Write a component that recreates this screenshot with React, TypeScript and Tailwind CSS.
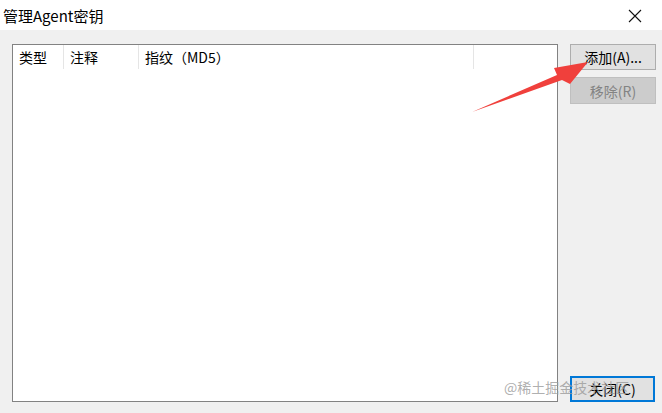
import React from 'react';

const font = { fontFamily: '"Microsoft YaHei", "Noto Sans CJK SC", "Liberation Sans", sans-serif' };

const columns = [
  { label: '类型', width: 'w-[51px]' },
  { label: '注释', width: 'w-[75px]' },
  { label: '指纹（MD5）', width: 'w-[335px]' },
];

const App: React.FC = () => {
  return (
    <div className="w-[662px] h-[413px] flex flex-col overflow-hidden relative text-black" style={font}>
      {/* title bar */}
      <div className="h-[30px] bg-white flex items-center justify-between pl-[3px] pr-[20px]">
        <span className="text-[15px] leading-none">管理Agent密钥</span>
        <svg width="14" height="14" viewBox="0 0 14 14" className="mt-[1px]">
          <path d="M1 1 L13 13 M13 1 L1 13" stroke="#111" strokeWidth="1.1" fill="none" />
        </svg>
      </div>

      {/* body */}
      <div className="flex-1 bg-[#f0f0f0] flex pt-[14px] pl-[12px] pb-[11px]">
        <div className="w-[546px] h-[358px] bg-white border border-[#828282]">
          <div className="flex h-[24px] items-center">
            {columns.map((c) => (
              <div key={c.label} className={`${c.width} h-full flex items-center pl-[6px] border-r border-[#e5e5e5] text-[14px]`}>
                {c.label}
              </div>
            ))}
          </div>
        </div>

        <div className="ml-[12px] w-[86px] flex flex-col">
          <button className="h-[26px] bg-[#e1e1e1] border border-[#adadad] text-[14px] leading-none">
            添加(A)...
          </button>
          <button className="mt-[7px] h-[27px] bg-[#cccccc] border border-[#bfbfbf] text-[14px] text-[#838383] leading-none">
            移除(R)
          </button>
          <div className="flex-1" />
          <button className="h-[26px] w-[85px] bg-[#e1e1e1] border-2 border-[#0078d7] text-[14px] leading-none">
            关闭(C)
          </button>
        </div>
      </div>

      {/* red annotation arrow */}
      <svg className="absolute left-0 top-0 pointer-events-none" width="662" height="413">
        <polygon points="472,112 557,75 554,68 588,62 570,84 562,80" fill="#f0403c" />
      </svg>

      {/* watermark */}
      <div className="absolute left-[504px] top-[377px] text-[14px] text-[#9a9a9a]/80 pointer-events-none">
        @稀土掘金技术社区
      </div>
    </div>
  );
};

export default App;
